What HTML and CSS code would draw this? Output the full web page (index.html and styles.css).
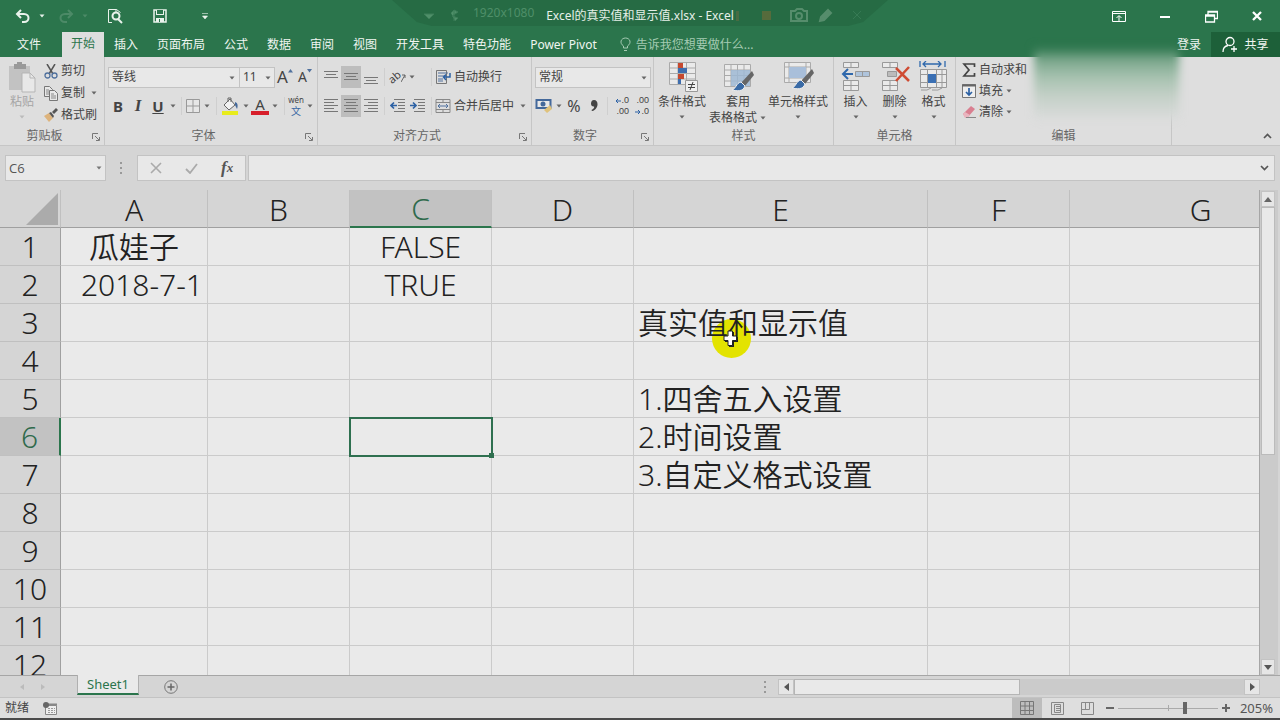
FILE: index.html
```html
<!DOCTYPE html>
<html lang="zh-CN">
<head>
<meta charset="utf-8">
<title>Excel的真实值和显示值.xlsx - Excel</title>
<link rel="stylesheet" href="styles.css">
</head>
<body>
<svg class="defs" aria-hidden="true">
  <symbol id="caret" viewBox="0 0 6 4"><path d="M0.5 0.5h5L3 3.5z" fill="currentColor"/></symbol>
  <symbol id="launch" viewBox="0 0 8 8"><path d="M.5 6V.5H6M3 3l4 4M7.500 4v3.500H4" fill="none" stroke="#777"/></symbol>
</svg>
<div class="app">
  <header class="titlebar">
    <div class="recorder" aria-hidden="true">
      <svg class="rec-icons" width="40" height="20" viewBox="0 0 40 20"><path d="M3 11h10l-5 5zM33 8v10M30 10l3-3 4 2-6 4 6 2-3 3" fill="#4f8f69" stroke="#3d7e59"/></svg>
      <span class="rec-size">1920x1080</span>
      <svg class="rec-right" width="150" height="20" viewBox="0 0 150 20"><rect x="29" y="8" width="9" height="9" fill="#566b3c"/><rect x="3" y="8" width="3" height="10" fill="#496b42"/><g fill="none" stroke="#568d6c" stroke-width="2"><path d="M58 8h4l2-2h5l2 2h3v10H58z"/><circle cx="66" cy="13" r="3"/><path d="M87 18l1-4 7-7 3 3-7 7z" fill="#568d6c"/></g><path d="M120 8l8 8M128 8l-8 8" stroke="#367a54"/></svg>
    </div>
    <div class="qat">
      <button class="qbtn undo" aria-label="撤消"><svg width="16" height="14" viewBox="0 0 16 14"><path d="M6 1L2 5l4 4M2 5h7c6 0 6 8 0 8H7" fill="none" stroke="#eaf3ec" stroke-width="2"/></svg><svg class="caret"><use href="#caret"/></svg></button>
      <button class="qbtn redo" aria-label="恢复"><svg width="16" height="14" viewBox="0 0 16 14"><path d="M10 1l4 4-4 4M14 5H7c-6 0-6 8 0 8h2" fill="none" stroke="#4c8a67" stroke-width="2"/></svg><svg class="caret"><use href="#caret"/></svg></button>
      <button class="qbtn" aria-label="打印预览"><svg width="16" height="16" viewBox="0 0 16 16"><path d="M5 14.500H1.500v-13h8l4 3M9 1v3" fill="none" stroke="#eaf3ec"/><circle cx="9" cy="8" r="3.500" fill="none" stroke="#eaf3ec" stroke-width="2"/><path d="M11 11l4 4" stroke="#eaf3ec" stroke-width="2"/></svg></button>
      <button class="qbtn" aria-label="保存"><svg width="14" height="14" viewBox="0 0 14 14"><path d="M1 1h12v12H1z" fill="none" stroke="#eaf3ec" stroke-width="1.500"/><path d="M3 1v5h8V1M3 9h8v4H3z" fill="#eaf3ec"/><path d="M4 1h6v4H4z" fill="#2b754c"/><path d="M6 10h1v3H6z" fill="#2b754c"/></svg></button>
      <button class="qbtn" aria-label="自定义快速访问工具栏"><svg width="6" height="7" viewBox="0 0 6 7"><path d="M0 .5h6M.5 3h5L3 6z" fill="#eaf3ec" stroke="#eaf3ec" stroke-width=".6"/></svg></button>
    </div>
    <h1 class="doc-title">Excel的真实值和显示值.xlsx - Excel</h1>
    <div class="winctl">
      <button aria-label="功能区显示选项"><svg width="14" height="11" viewBox="0 0 14 11"><path d="M.5.5h13v10H.5zM1 2.500h12M7 10V5M4.500 7L7 4.500 9.500 7" fill="none" stroke="#fff"/></svg></button>
      <button aria-label="最小化"><svg width="10" height="4" viewBox="0 0 10 4"><path d="M0 3h10" stroke="#fff" stroke-width="2"/></svg></button>
      <button aria-label="还原"><svg width="13" height="13" viewBox="0 0 13 13"><path d="M.5 5h9v7h-9zM.5 6h9M3 5V1.500h9.500v7H10M3 2h9" fill="none" stroke="#fff" stroke-width="1.300"/></svg></button>
      <button aria-label="关闭"><svg width="10" height="10" viewBox="0 0 10 10"><path d="M1 1l8 8M9 1L1 9" stroke="#fff" stroke-width="2.300"/></svg></button>
    </div>
  </header>

  <nav class="tabs">
    <a href="#" class="file">文件</a>
    <a href="#" class="active">开始</a>
    <a href="#">插入</a>
    <a href="#">页面布局</a>
    <a href="#">公式</a>
    <a href="#">数据</a>
    <a href="#">审阅</a>
    <a href="#">视图</a>
    <a href="#">开发工具</a>
    <a href="#">特色功能</a>
    <a href="#">Power Pivot</a>
    <label class="tell"><svg width="11" height="15" viewBox="0 0 11 15"><path d="M3.500 11V9C-1 6 1 1 5.500 1S12 6 7.500 9v2zM4 13.500h3" fill="none" stroke="#a5cbb3"/></svg><input type="text" placeholder="告诉我您想要做什么..."></label>
    <a href="#" class="login">登录</a>
    <button class="share"><svg width="16" height="17" viewBox="0 0 16 17"><circle cx="8" cy="5.500" r="4" fill="none" stroke="#fff" stroke-width="1.300"/><path d="M1 16c0-4 2-6 5-6.500M9 13h6M12 10v6" fill="none" stroke="#fff" stroke-width="1.300"/></svg>共享</button>
  </nav>

  <section class="ribbon">
    <div class="group clip">
      <div class="body">
        <button class="paste"><svg width="28" height="31" viewBox="0 0 28 31"><path d="M1 4h21v24H1z" fill="#c2c2c2"/><path d="M6 2h3V0h5v2h4v5H6z" fill="#999"/><path d="M14 11h8l5 5v14H14z" fill="#e8e8e8" stroke="#b5b5b5"/><path d="M22 11v5h5" fill="none" stroke="#b5b5b5"/></svg><span>粘贴</span><svg class="caret"><use href="#caret"/></svg></button>
        <div class="stack">
          <button><svg width="14" height="15" viewBox="0 0 14 15"><path d="M3 0l6 10M11 0L5 10" stroke="#555" stroke-width="1.500"/><g fill="none" stroke="#50719e" stroke-width="1.300"><circle cx="3.500" cy="11.500" r="2.500"/><circle cx="10.500" cy="11.500" r="2.500"/></g></svg>剪切</button>
          <button><svg width="14" height="15" viewBox="0 0 14 15"><g fill="#e8e8e8" stroke="#777"><path d="M.5.5h5l3 3v7h-8z"/><path d="M5.500 4.500h5l3 3v7h-8z"/></g><path d="M2 4h3M2 6h3M2 8h3M7 8h3M7 10h5M7 12h5" stroke="#888"/></svg>复制<svg class="caret"><use href="#caret"/></svg></button>
          <button><svg width="14" height="14" viewBox="0 0 14 14"><path d="M0 8l5-3 4 5-4 4z" fill="#ddb37c"/><path d="M5 5l2-1 3 4-1 2zM8 4l4-4 2 2-4 4z" fill="#555"/></svg>格式刷</button>
        </div>
      </div>
      <footer>剪贴板<svg class="launch"><use href="#launch"/></svg></footer>
    </div>

    <div class="group font">
      <div class="body rows">
        <div class="row">
          <span class="pick name"><select aria-label="字体"><option>等线</option></select><svg class="caret"><use href="#caret"/></svg></span>
          <span class="pick size"><select aria-label="字号"><option>11</option></select><svg class="caret"><use href="#caret"/></svg></span>
          <button class="t w20 big-a" aria-label="增大字号">A<svg width="5" height="4" viewBox="0 0 5 4"><path d="M0 3.500h5L2.500 0z" fill="#50719e"/></svg></button>
          <button class="t w20 small-a" aria-label="减小字号">A<svg width="5" height="4" viewBox="0 0 5 4"><path d="M0 0h5L2.500 3.500z" fill="#50719e"/></svg></button>
        </div>
        <div class="row">
          <button class="t w20"><b>B</b></button>
          <button class="t w20"><i class="ital">I</i></button>
          <button class="t w20"><b class="under">U</b></button><button class="t w10" aria-label="下划线选项"><svg class="caret"><use href="#caret"/></svg></button>
          <span class="sep"></span>
          <button class="t" aria-label="边框"><svg width="16" height="16" viewBox="0 0 16 16"><path d="M1.500 1.500h13v13h-13zM8 1v14M1 8h14" fill="#e6e6e6" stroke="#999"/></svg><svg class="caret wide"><use href="#caret"/></svg></button>
          <span class="sep"></span>
          <button class="t" aria-label="填充颜色"><svg width="20" height="18" viewBox="0 0 20 18"><path d="M4 8l6-6 5 6-6 5z" fill="#f2f2f2" stroke="#666"/><path d="M8 5V1h3v4" fill="none" stroke="#666"/><path d="M15 5c3 1 3 4 2 7l-2-4z" fill="#44699b"/><path d="M2 14h16v4H2z" fill="#e8ec1c"/></svg><svg class="caret"><use href="#caret"/></svg></button>
          <button class="t fontcolor" aria-label="字体颜色"><span>A</span><svg class="caret wide"><use href="#caret"/></svg></button>
          <span class="sep"></span>
          <button class="t" aria-label="拼音"><span class="pinyin"><small>wén</small><em>文</em></span><svg class="caret wide"><use href="#caret"/></svg></button>
        </div>
      </div>
      <footer>字体<svg class="launch"><use href="#launch"/></svg></footer>
    </div>

    <div class="group align">
      <div class="body rows">
        <div class="row">
          <button class="t w20" aria-label="顶端对齐"><svg width="14" height="16" viewBox="0 0 14 16"><path d="M0 2.500h14M2 5.500h10M0 8.500h14" stroke="#777"/></svg></button>
          <button class="t w20 on" aria-label="垂直居中"><svg width="14" height="16" viewBox="0 0 14 16"><path d="M0 4.500h14M2 7.500h10M0 10.500h14" stroke="#777"/></svg></button>
          <button class="t w20" aria-label="底端对齐"><svg width="14" height="16" viewBox="0 0 14 16"><path d="M0 8.500h14M2 11.500h10M0 14.500h14" stroke="#777"/></svg></button>
          <span class="sep"></span>
          <button class="t w30" aria-label="方向"><span class="turned">ab</span><svg width="5" height="12" viewBox="0 0 5 12"><path d="M0 11l4-7M1 4h3v3" fill="none" stroke="#666"/></svg><svg class="caret"><use href="#caret"/></svg></button>
          <span class="sep wide-sep"></span>
          <button class="t lab"><svg width="16" height="16" viewBox="0 0 16 16"><path d="M1.500 1.500h10v13h-10z" fill="none" stroke="#777"/><path d="M3 4h10M3 7h8M3 10h5M3 12h5" stroke="#50719e"/><path d="M15 4v4h-6M11 5.500L8.500 8l2.500 3" fill="none" stroke="#2c61a4" stroke-width="1.500"/></svg>自动换行</button>
        </div>
        <div class="row">
          <button class="t w20" aria-label="左对齐"><svg width="14" height="16" viewBox="0 0 14 16"><path d="M0 1.500h14M0 4.500h10M0 7.500h14M0 10.500h10M0 13.500h14" stroke="#777"/></svg></button>
          <button class="t w20 on" aria-label="居中"><svg width="14" height="16" viewBox="0 0 14 16"><path d="M0 1.500h14M2 4.500h10M0 7.500h14M2 10.500h10M0 13.500h14" stroke="#777"/></svg></button>
          <button class="t w20" aria-label="右对齐"><svg width="14" height="16" viewBox="0 0 14 16"><path d="M0 1.500h14M4 4.500h10M0 7.500h14M4 10.500h10M0 13.500h14" stroke="#777"/></svg></button>
          <span class="sep"></span>
          <button class="t w20" aria-label="减少缩进"><svg width="16" height="16" viewBox="0 0 16 16"><path d="M4 1.500h11M8 4.500h7M8 7.500h7M8 10.500h7M4 13.500h11" stroke="#777"/><path d="M7 7.500H1M4 4.500l-3 3 3 3" fill="none" stroke="#2c61a4" stroke-width="1.700"/></svg></button>
          <button class="t w20" aria-label="增加缩进"><svg width="16" height="16" viewBox="0 0 16 16"><path d="M4 1.500h11M8 4.500h7M8 7.500h7M8 10.500h7M4 13.500h11" stroke="#777"/><path d="M0 7.500h6M3 4.500l3 3-3 3" fill="none" stroke="#2c61a4" stroke-width="1.700"/></svg></button>
          <span class="sep"></span>
          <button class="t lab"><svg width="16" height="16" viewBox="0 0 16 16"><path d="M1 1.500h14v13H1zM1 4.500h14M1 11.500h14M8 1v3M8 12v3" fill="none" stroke="#888"/><path d="M3 8h10M5 6L3 8l2 2M11 6l2 2-2 2" fill="none" stroke="#50719e"/></svg>合并后居中<svg class="caret far"><use href="#caret"/></svg></button>
        </div>
      </div>
      <footer>对齐方式<svg class="launch"><use href="#launch"/></svg></footer>
    </div>

    <div class="group number">
      <div class="body rows">
        <div class="row">
          <span class="pick format"><select aria-label="数字格式"><option>常规</option></select><svg class="caret"><use href="#caret"/></svg></span>
        </div>
        <div class="row">
          <button class="t w30" aria-label="会计数字格式"><svg width="18" height="16" viewBox="0 0 18 16"><path d="M1.500 2h14v8h-14z" fill="#e8e8e8" stroke="#44699b" stroke-width="2"/><circle cx="8" cy="6" r="2.500" fill="#44699b"/><path d="M9 12l6-5 2 4-5 4z" fill="#dfc27c"/></svg><svg class="caret wide"><use href="#caret"/></svg></button>
          <button class="t w20 pct">%</button>
          <button class="t w20 comma" aria-label="千位分隔样式"><svg width="8" height="12" viewBox="0 0 8 12"><path d="M4 0c5 0 5 9-2 11l-.500-1C4 9 4.500 7 4 6.500 0 7 0 0 4 0z" fill="#444"/></svg></button>
          <span class="sep"></span>
          <button class="t w20 dec"><span><svg width="6" height="6" viewBox="0 0 6 6"><path d="M6 3H1M3 1L1 3l2 2" fill="none" stroke="#2c61a4"/></svg>.0</span><span>.00</span></button>
          <button class="t w20 dec"><span>.00</span><span><svg width="6" height="6" viewBox="0 0 6 6"><path d="M0 3h5M3 1l2 2-2 2" fill="none" stroke="#2c61a4"/></svg>.0</span></button>
        </div>
      </div>
      <footer>数字<svg class="launch"><use href="#launch"/></svg></footer>
    </div>

    <div class="group styles">
      <div class="body">
        <button class="big w56"><svg width="31" height="31" viewBox="0 0 31 31"><path d="M2.500 1.500h26v22h-26zM2 7h27M2 12.500h27M2 18h27M11 1v22M19.500 1v22" fill="#eaeaea" stroke="#aaa"/><path d="M11 2h5v5h-5zM11 13h6v5h-6z" fill="#c6492f"/><path d="M11 7h9v5h-9zM11 18h3v5h-3z" fill="#3f6eae"/><path d="M18.500 19.500h12v11h-12z" fill="#f0f0f0" stroke="#999"/><path d="M21 23.500h7M21 26.500h7M26 21l-3 8" stroke="#444"/></svg><span>条件格式</span><svg class="caret"><use href="#caret"/></svg></button>
        <button class="big w56"><svg width="31" height="31" viewBox="0 0 31 31"><path d="M1.500 3.500h26v22h-26zM1 9h27M1 14.500h27M1 20h27M8 3v22M14.500 3v22M21 3v22" fill="#eaeaea" stroke="#aaa"/><path d="M8 9h19v16H8z" fill="#9fb8d4" opacity=".85"/><path d="M29 10l2 4-9 11-4-3z" fill="#666"/><path d="M18 21l4 4c-2 6-8 5-13 4 4-1 4-7 9-8z" fill="#3a6ba6" stroke="#eee"/></svg><span>套用</span><span class="nowrap">表格格式<svg class="caret wide"><use href="#caret"/></svg></span></button>
        <button class="big w64"><svg width="31" height="31" viewBox="0 0 31 31"><path d="M1.500 1.500h26v20h-26zM1 6h27M1 17h27M6 1v21M23 1v21" fill="#eaeaea" stroke="#aaa"/><path d="M6 6h17v11H6z" fill="#a9bfda"/><path d="M29 8l2 4-9 11-4-3z" fill="#666"/><path d="M18 19l4 4c-2 6-8 5-13 4 4-1 4-7 9-8z" fill="#3a6ba6" stroke="#eee"/></svg><span>单元格样式</span><svg class="caret"><use href="#caret"/></svg></button>
      </div>
      <footer>样式</footer>
    </div>

    <div class="group cells">
      <div class="body">
        <button class="big w39"><svg width="31" height="31" viewBox="0 0 31 31"><g fill="#eaeaea" stroke="#999"><path d="M3.500 1.500h15v5h-15zM11 1v5M3.500 19.500h15v10h-15zM3 24.500h15M11 19v10"/><path d="M15.500 10.500h14v5h-14zM22.500 10v6" fill="#afc4dc"/></g><path d="M13 13H3M8 8l-5 5 5 5" fill="none" stroke="#2f68ac" stroke-width="2"/></svg><span>插入</span><svg class="caret"><use href="#caret"/></svg></button>
        <button class="big w39"><svg width="31" height="31" viewBox="0 0 31 31"><g fill="#eaeaea" stroke="#999"><path d="M3.500 1.500h15v5h-15zM11 1v5M3.500 19.500h15v10h-15zM3 24.500h15M11 19v10"/><path d="M8.500 10.500h9v5h-9z" fill="#bbb"/></g><path d="M17 7l13 13M30 6L17 20" stroke="#cf4b32" stroke-width="2.500"/></svg><span>删除</span><svg class="caret"><use href="#caret"/></svg></button>
        <button class="big w39"><svg width="31" height="31" viewBox="0 0 31 31"><path d="M5 3h18M8 0L5 3l3 3M20 0l3 3-3 3M2 0v6M27 0v6" fill="none" stroke="#2f68ac" stroke-width="1.300"/><path d="M2.500 8.500h26v18h-26zM2 13.500h27M2 21.500h27M9.500 8v18M18.500 8v18M24 8v18M3 29h6l4-2M14 29h6l4-2" fill="#eaeaea" stroke="#999"/><path d="M10 13h8v9h-8z" fill="#3a6fb3"/></svg><span>格式</span><svg class="caret"><use href="#caret"/></svg></button>
      </div>
      <footer>单元格</footer>
    </div>

    <div class="group edit">
      <div class="body">
        <div class="stack">
          <button><svg width="14" height="14" viewBox="0 0 14 14"><path d="M12.500 4V1H2l5 6-5 6h10.500v-3" fill="none" stroke="#444" stroke-width="1.700"/></svg>自动求和</button>
          <button><svg width="14" height="14" viewBox="0 0 14 14"><path d="M.5.5h13v13H.5z" fill="#eee" stroke="#777"/><path d="M0 1.500h14" stroke="#666" stroke-width="2"/><path d="M7 4v7M4 8l3 3 3-3" fill="none" stroke="#2c61a4" stroke-width="1.700"/></svg>填充<svg class="caret"><use href="#caret"/></svg></button>
          <button><svg width="14" height="14" viewBox="0 0 14 14"><path d="M1 9l8-8 4 3-7 8H3z" fill="#d97f90"/><path d="M1 9l2-2 5 3-2 3H3z" fill="#e9b4be"/><path d="M4 12.500h10" stroke="#888"/></svg>清除<svg class="caret"><use href="#caret"/></svg></button>
        </div>
      </div>
      <footer>编辑</footer>
      <div class="smudge" aria-hidden="true"></div>
    </div>
    <button class="collapse" aria-label="折叠功能区"><svg width="9" height="6" viewBox="0 0 9 6"><path d="M1 5l3.500-3.500L8 5" fill="none" stroke="#555" stroke-width="1.700"/></svg></button>
  </section>

  <section class="formula">
    <span class="namebox"><input type="text" value="C6" aria-label="名称框"><svg class="caret"><use href="#caret"/></svg></span>
    <span class="dots"></span>
    <div class="fxbox">
      <button aria-label="取消"><svg width="12" height="12" viewBox="0 0 12 12"><path d="M1 1l10 10M11 1L1 11" stroke="#aaa" stroke-width="1.600"/></svg></button>
      <button aria-label="输入"><svg width="13" height="11" viewBox="0 0 13 11"><path d="M1 6l4 4 7-9" fill="none" stroke="#aaa" stroke-width="1.800"/></svg></button>
      <button class="fx" aria-label="插入函数">f<sub>x</sub></button>
    </div>
    <div class="fxinput"><input type="text" aria-label="编辑栏"><svg width="9" height="6" viewBox="0 0 9 6"><path d="M1 1l3.500 3.500L8 1" fill="none" stroke="#555" stroke-width="1.700"/></svg></div>
  </section>

  <main class="work">
    <div class="sheet">
      <table>
        <colgroup><col class="c-head"><col class="c-a"><col class="c-n"><col class="c-n"><col class="c-n"><col class="c-e"><col class="c-n"><col class="c-g"></colgroup>
        <thead><tr><th class="corner"><svg width="32" height="32" viewBox="0 0 32 32"><path d="M32 0v32H0z" fill="#ababab"/></svg></th><th>A</th><th>B</th><th class="sel">C</th><th>D</th><th>E</th><th>F</th><th>G</th></tr></thead>
        <tbody>
          <tr><th>1</th><td class="mid">瓜娃子</td><td></td><td class="mid">FALSE</td><td></td><td></td><td></td><td></td></tr>
          <tr><th>2</th><td class="right">2018-7-1</td><td></td><td class="mid">TRUE</td><td></td><td></td><td></td><td></td></tr>
          <tr><th>3</th><td></td><td></td><td></td><td></td><td class="holder"><span class="spot"></span><span class="over">真实值和显示值</span><svg class="pointer" width="16" height="18" viewBox="0 0 16 18"><path d="M6 2h5v5h4v5h-4v5H6v-5H2V7h4z" fill="#222"/><path d="M5 1h4.500v5h4v4.500h-4v5H5v-5H1V6h4z" fill="#fff" stroke="#222"/></svg></td><td></td><td></td></tr>
          <tr><th>4</th><td></td><td></td><td></td><td></td><td></td><td></td><td></td></tr>
          <tr><th>5</th><td></td><td></td><td></td><td></td><td>1.四舍五入设置</td><td></td><td></td></tr>
          <tr><th class="sel">6</th><td></td><td></td><td class="holder"><span class="cursor"></span></td><td></td><td>2.时间设置</td><td></td><td></td></tr>
          <tr><th>7</th><td></td><td></td><td></td><td></td><td>3.自定义格式设置</td><td></td><td></td></tr>
          <tr><th>8</th><td></td><td></td><td></td><td></td><td></td><td></td><td></td></tr>
          <tr><th>9</th><td></td><td></td><td></td><td></td><td></td><td></td><td></td></tr>
          <tr><th>10</th><td></td><td></td><td></td><td></td><td></td><td></td><td></td></tr>
          <tr><th>11</th><td></td><td></td><td></td><td></td><td></td><td></td><td></td></tr>
          <tr><th>12</th><td></td><td></td><td></td><td></td><td></td><td></td><td></td></tr>
        </tbody>
      </table>
    </div>
    <div class="vscroll">
      <button aria-label="向上滚动"><svg width="8" height="5" viewBox="0 0 8 5"><path d="M0 5h8L4 0z" fill="#666"/></svg></button>
      <div class="vthumb"></div>
      <div class="vtrack"></div>
      <button aria-label="向下滚动"><svg width="8" height="5" viewBox="0 0 8 5"><path d="M0 0h8L4 5z" fill="#555"/></svg></button>
    </div>
  </main>

  <section class="sheetbar">
    <div class="navs"><button aria-label="上一张"><svg width="4" height="6" viewBox="0 0 4 6"><path d="M4 0v6L0 3z" fill="#bbb"/></svg></button><button aria-label="下一张"><svg width="4" height="6" viewBox="0 0 4 6"><path d="M0 0v6l4-3z" fill="#bbb"/></svg></button></div>
    <button class="stab">Sheet1</button>
    <button class="add" aria-label="新工作表"><svg width="14" height="14" viewBox="0 0 14 14"><circle cx="7" cy="7" r="6.300" fill="none" stroke="#777"/><path d="M7 3.500v7M3.500 7h7" stroke="#666" stroke-width="1.500"/></svg></button>
    <span class="dots"></span>
    <div class="hscroll">
      <button aria-label="向左滚动"><svg width="5" height="8" viewBox="0 0 5 8"><path d="M5 0v8L0 4z" fill="#555"/></svg></button>
      <div class="hthumb"></div>
      <div class="htrack"></div>
      <button aria-label="向右滚动"><svg width="5" height="8" viewBox="0 0 5 8"><path d="M0 0v8l5-4z" fill="#555"/></svg></button>
    </div>
  </section>

  <footer class="status">
    <span class="ready">就绪</span>
    <svg width="14" height="13" viewBox="0 0 14 13"><path d="M2.500 3.500h11v9h-11z" fill="#eee" stroke="#888"/><path d="M5 2.500h9" stroke="#888" stroke-width="2"/><path d="M5 6.500h7M5 8.500h7M5 10.500h7" stroke="#999" stroke-dasharray="2 1"/><circle cx="3" cy="3" r="3" fill="#666"/></svg>
    <div class="views">
      <button class="on" aria-label="普通"><svg width="14" height="14" viewBox="0 0 14 14"><path d="M.5.5h13v13H.5zM5 0v14M9.500 0v14M0 5h14M0 9.500h14" fill="none" stroke="#777"/></svg></button>
      <button aria-label="页面布局"><svg width="13" height="13" viewBox="0 0 13 13"><path d="M.5.5h12v12H.5zM3.500 2.500h6v8h-6zM5 4.500h4M5 6.500h4M5 8.500h4" fill="none" stroke="#888"/></svg></button>
      <button aria-label="分页预览"><svg width="13" height="13" viewBox="0 0 13 13"><path d="M.5 12.500V.5h12v12zM4.500 0v7.500M0 7.500h8.500V0" fill="none" stroke="#888"/></svg></button>
    </div>
    <button class="zoom" aria-label="缩小"><svg width="8" height="8" viewBox="0 0 8 8"><path d="M0 4h8" stroke="#666" stroke-width="2"/></svg></button>
    <input class="slider" type="range" min="0" max="100" value="68" aria-label="缩放">
    <button class="zoom" aria-label="放大"><svg width="8" height="8" viewBox="0 0 8 8"><path d="M0 4h8M4 0v8" stroke="#666" stroke-width="2"/></svg></button>
    <span class="pct205">205%</span>
  </footer>
</div>
</body>
</html>
```
FILE: styles.css
```css
* { box-sizing: border-box; }
body { margin: 0; font: 12px/16px "Noto Sans", "Noto Sans CJK SC", sans-serif; color: #444; background: #d5d5d5; }
button, input, select { font: inherit; color: inherit; border: 0; padding: 0; margin: 0; background: none; border-radius: 0; outline: 0; }
button { display: flex; align-items: center; justify-content: center; white-space: nowrap; }
a { color: inherit; text-decoration: none; }
svg { display: block; flex: none; }
.defs { position: absolute; width: 0; height: 0; }
.caret { width: 6px; height: 4px; color: #666; }
.app { height: 100vh; display: flex; flex-direction: column; overflow: hidden; border-bottom: 2px solid #4a4a4a; }

.titlebar { position: relative; flex: none; height: 32px; display: grid; grid-template-columns: 1fr auto 1fr; align-items: center; background: #2b754c; color: #e6f0e9; }
.recorder { position: absolute; top: 0; left: 50%; width: 496px; height: 26px; margin-left: -248px; padding: 0 35px; display: flex; align-items: center; background: #266b44; clip-path: polygon(0 0, 100% 0, 95% 85%, 92% 100%, 8% 100%, 5% 85%); }
.rec-icons { margin-left: -6px; }
.rec-size { margin-left: 12px; color: #4f8f69; }
.rec-right { margin-left: auto; margin-right: -30px; }
.doc-title { position: relative; margin: 0; font-size: 12px; font-weight: 400; }
.qat { display: flex; align-items: center; height: 32px; padding-left: 14px; }
.qbtn { width: 45px; height: 32px; }
.qbtn .caret { color: #e6f0e9; margin-left: 8px; }
.qbtn.undo { width: 44px; justify-content: flex-start; padding-left: 1px; }
.qbtn.redo { width: 34px; justify-content: flex-start; }
.redo .caret { color: #4c8a67; }
.winctl { display: flex; justify-content: flex-end; }
.winctl button { width: 46px; height: 32px; }

.tabs { flex: none; height: 25px; display: flex; align-items: center; background: #2b754c; color: #f0f5f1; padding-left: 1px; }
.tabs a { padding: 0 10px 0 9px; line-height: 24px; }
.tabs .file { width: 61px; padding: 0 0 0 16px; }
.tabs .active { width: 42px; margin-right: 1px; padding: 0 9px; background: #dedede; color: #2b754c; align-self: stretch; }
.tell { display: flex; align-items: center; gap: 5px; margin-left: 13px; flex: 1; }
.tell input { width: 160px; }
.tell input::placeholder { color: #a5cbb3; opacity: 1; }
.share { width: 69px; height: 25px; gap: 6px; background: #1d6039; color: #f0f5f1; }

.ribbon { position: relative; flex: none; height: 89px; display: flex; background: #dedede; border-bottom: 1px solid #c6c6c6; }
.group { display: flex; flex-direction: column; position: relative; border-right: 1px solid #c6c6c6; }
.group .body { flex: 1; display: flex; }
.group footer { position: relative; height: 18px; line-height: 18px; text-align: center; color: #666; }
.launch { position: absolute; right: 4px; top: 6px; width: 8px; height: 8px; }
.clip { width: 105px; }
.clip footer { padding-right: 15px; }
.font { width: 213px; }
.font footer { padding-right: 15px; }
.align { width: 214px; }
.number { width: 122px; }
.styles { width: 180px; }
.cells { width: 122px; }
.edit { width: 216px; }
.align footer { padding-right: 15px; }
.number footer { padding-right: 15px; }
.paste { width: 44px; flex-direction: column; justify-content: flex-start; padding-top: 5px; color: #a5a5a5; }
.paste span { margin: 1px 0 5px; }
.paste .caret { color: #bbb; }
.stack { padding-top: 3px; display: flex; flex-direction: column; align-items: flex-start; }
.stack button { height: 22px; gap: 3px; }
.stack .caret { margin-left: 3px; }
.edit .stack { padding: 2px 0 0 6px; }
.edit .stack button { height: 21px; }
.edit .stack .caret { margin-left: 0; }
.rows { flex-direction: column; gap: 7px; padding: 9px 0 0 3px; }
.row { display: flex; align-items: center; height: 22px; }
.t { height: 22px; }
.w10 { width: 10px; }
.w20 { width: 20px; }
.w30 { width: 29px; }
.on { background: #bdbdbd; }
.t b { font-size: 15px; }
.ital { font: italic bold 17px "Liberation Serif", serif; }
.under { text-decoration: underline; }
.caret.wide { margin: 0 3px; }
.t .caret { margin-left: 3px; margin-right: 2px; }
.t .caret.wide { margin-right: 3px; }
.t.w10 .caret { margin: 0; }
.sep { width: 1px; height: 18px; margin: 0 3px; background: #cfcfcf; }
.wide-sep { margin-left: 14px; }
.lab { gap: 3px; }
.lab .far { margin-left: 3px; }
.turned { transform: rotate(-40deg); font-size: 11px; line-height: 14px; }
.pick { position: relative; height: 21px; display: block; }
.pick select { appearance: none; width: 100%; height: 100%; padding: 0 3px; border: 1px solid #c3c3c3; background: #e8e8e8; }
.pick .caret, .namebox .caret { position: absolute; right: 4px; top: 9px; }
.name { width: 131px; }
.size { width: 36px; }
.name select { border-right: 0; }
.format { width: 116px; }
.big-a { font-size: 17px; }
.small-a { font-size: 14px; }
.big-a svg, .small-a svg { align-self: flex-start; margin-top: 3px; }
.fontcolor span { width: 18px; height: 18px; font-size: 15px; line-height: 15px; border-bottom: 4px solid #d71f2b; }
.pinyin { width: 16px; display: flex; flex-direction: column; align-items: center; }
.pinyin small { font-size: 8px; line-height: 10px; }
.pinyin em { font-style: normal; font-size: 10px; line-height: 12px; color: #3a68a4; }
.pct { font-size: 16px; }
.dec { flex-direction: column; align-items: flex-end; font: 9px/11px "Liberation Sans", sans-serif; padding-right: 2px; }
.dec span { display: flex; align-items: center; }
.big { flex-direction: column; justify-content: flex-start; padding-top: 4px; line-height: 16px; }
.big > svg:first-child { margin-bottom: 2px; }
.big > .caret { margin-top: 5px; }
.w39 { width: 39px; }
.w56 { width: 56px; }
.w64 { width: 64px; }
.nowrap { display: flex; align-items: center; margin-left: 2px; }
.cells .body { padding-left: 2px; }
.smudge { position: absolute; left: 78px; right: -8px; top: -10px; height: 72px; filter: blur(4px); background: linear-gradient(#2b754c, #7ba78c 18%, #a7c2b0 42%, #c6d1c9 70%, #dadcdb); }
.collapse { margin-left: auto; align-self: flex-end; width: 25px; height: 18px; }

.formula { flex: none; height: 44px; display: flex; align-items: center; padding: 0 5px; background: #d5d5d5; }
.namebox { position: relative; width: 101px; height: 26px; }
.namebox input { width: 100%; height: 100%; padding: 0 3px; font-family: "Open Sans", sans-serif; font-size: 13px; color: #555; background: #e8e8e8; border: 1px solid #c3c3c3; }
.namebox .caret { top: 11px; color: #777; }
.dots { width: 2px; height: 12px; background: repeating-linear-gradient(#999 0 2px, transparent 2px 5px); }
.formula .dots { margin: 0 15px 0 14px; }
.fxbox { display: flex; width: 109px; height: 26px; background: #e8e8e8; border: 1px solid #c3c3c3; }
.fxbox button { flex: 1; }
.fx { font: italic bold 17px "Liberation Serif", serif; color: #555; }
.fx sub { font-size: 13px; line-height: 10px; }
.fxinput { flex: 1; height: 26px; margin-left: 2px; display: flex; align-items: center; padding-right: 5px; background: #e8e8e8; border: 1px solid #c3c3c3; }
.fxinput input { flex: 1; }

.work { flex: 1; min-height: 0; display: flex; }
.sheet { flex: 1; min-width: 0; overflow: hidden; border-right: 1px solid #a6a6a6; }
.sheet table { table-layout: fixed; width: 1332px; border-spacing: 0; font: 350 30px/34px "Noto Sans", "Noto Sans CJK SC", sans-serif; color: #222; }
.c-head { width: 61px; }
.c-a { width: 147px; }
.c-n { width: 142px; }
.c-e { width: 294px; }
.c-g { width: 262px; }
.sheet th, .sheet td { height: 38px; padding: 1px 4px 0; font-weight: 350; text-align: left; white-space: nowrap; border-right: 1px solid #cbcbcb; border-bottom: 1px solid #cbcbcb; background: #eaeaea; }
.sheet .holder { position: relative; }
.sheet th { background: #d5d5d5; text-align: center; border-color: #c0c0c0; }
.sheet thead th { height: 37px; padding: 2px 0 0; border-bottom-color: #a0a0a0; }
.sheet tbody th { border-right-color: #a0a0a0; padding: 1px 0 0; }
.sheet thead .corner { padding: 0 2px 0 26px; }
.sheet th.sel { background: #c2c2c2; color: #2f6a4c; }
.sheet thead th.sel { border-bottom: 2px solid #2b754c; }
.sheet tbody th.sel { border-right: 2px solid #2b754c; }
.sheet .mid { text-align: center; }
.sheet .right { text-align: right; }
.cursor { position: absolute; inset: -1px -2px -2px -1px; border: 2px solid #2f7050; }
.cursor::after { content: ""; position: absolute; right: -3px; bottom: -3px; width: 5px; height: 5px; background: #2f7050; }
.spot { position: absolute; left: 78px; top: 15px; width: 39px; height: 39px; border-radius: 50%; background: #e3e300; z-index: 1; }
.over { position: relative; z-index: 2; }
.pointer { position: absolute; left: 89px; top: 26px; z-index: 3; }

.vscroll { width: 20px; padding: 1px 3px 0 1px; display: flex; flex-direction: column; background: #cbcbcb; border-right: 2px solid #d5d5d5; }
.vscroll button { height: 16px; background: #e6e6e6; border: 1px solid #c3c3c3; }
.vthumb { flex: 247; background: #e9e9e9; border: 1px solid #bbb; }
.vtrack { flex: 205; }

.sheetbar { flex: none; height: 22px; display: flex; align-items: center; border-top: 1px solid #a6a6a6; background: #d5d5d5; }
.navs { display: flex; gap: 17px; width: 77px; padding-left: 20px; }
.stab { align-self: stretch; width: 62px; margin-top: -1px; margin-bottom: 2px; padding-bottom: 1px; font-size: 13px; background: #eaeaea; color: #2b754c; border: 1px solid #b0b0b0; border-top: 0; border-bottom: 2px solid #2b754c; }
.add { margin-left: 25px; }
.sheetbar .dots { margin-left: auto; margin-right: 12px; }
.hscroll { flex: 0 0 482px; height: 16px; display: flex; margin-right: 20px; background: #cbcbcb; }
.hscroll button { width: 16px; background: #e6e6e6; border: 1px solid #c3c3c3; }
.hthumb { flex: 225; background: #e9e9e9; border: 1px solid #b5b5b5; }
.htrack { flex: 225; }

.status { flex: none; height: 21px; display: flex; align-items: center; padding: 0 7px 0 5px; border-top: 1px solid #c3c3c3; background: #dedede; }
.ready { margin-right: 14px; }
.views { display: flex; margin-left: auto; align-self: stretch; }
.views button { width: 30px; }
.zoom { width: 16px; height: 20px; }
.slider { appearance: none; width: 100px; height: 12px; background: linear-gradient(#aaa, #aaa) center / 100% 1px no-repeat, linear-gradient(#aaa, #aaa) center / 1px 6px no-repeat; }
.slider::-webkit-slider-thumb { appearance: none; width: 4px; height: 12px; background: #666; }
.pct205 { width: 39px; text-align: right; font-size: 13px; color: #555; }
```
